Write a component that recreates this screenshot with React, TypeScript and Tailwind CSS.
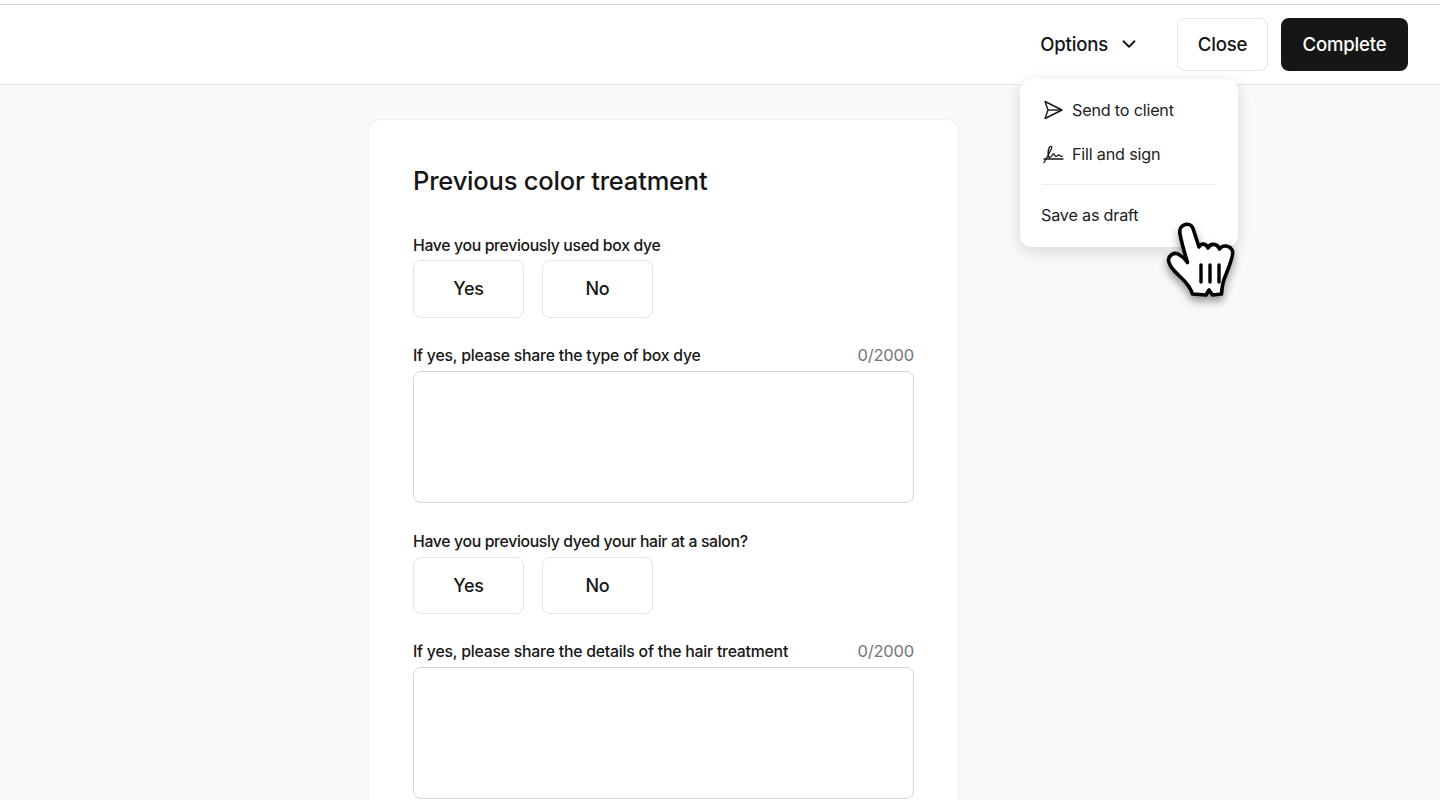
import { ChevronDown } from "lucide-react";

const FONT = "font-['Inter','Noto_Sans',sans-serif]";

const YesNo = () => (
  <div className="flex gap-[18px]">
    {["Yes", "No"].map((label) => (
      <button
        key={label}
        className="flex h-[57.5px] w-[111px] items-center justify-center rounded-lg border border-[#e4e4e4] bg-white text-[18px] font-medium tracking-[-0.2px] text-[#161616]"
      >
        {label}
      </button>
    ))}
  </div>
);

const TextField = ({ label }: { label: string }) => (
  <div>
    <div className="flex h-[30px] items-center justify-between">
      <span className="text-[15.8px] font-medium tracking-[-0.22px] text-[#161616]">{label}</span>
      <span className="text-[16.5px] tracking-[-0.2px] text-[#757575]">0/2000</span>
    </div>
    <div className="h-[132.5px] rounded-lg border border-[#d6d6d6] bg-white" />
  </div>
);

const SendIcon = () => (
  <svg width="22" height="22" viewBox="0 0 22 22" fill="none" stroke="#161616" strokeWidth="1.4" strokeLinejoin="round" className="ml-px">
    <path d="M3 2.5 20 11 3 19.5 6 11Z" />
    <path d="M6 11h14" />
  </svg>
);

const SignIcon = () => (
  <svg width="22" height="22" viewBox="0 0 22 22" fill="none" stroke="#161616" strokeWidth="1.3" strokeLinecap="round" strokeLinejoin="round" className="ml-px">
    <path d="M2 19.5C4.5 15 8 9 9.5 5.5 10.5 3 8 2.5 7 5 6 7.5 6 12 7 14.5 9.5 15 10 11 11.5 11 12.5 11 12.5 13.5 14 13.5 15.5 13.5 15.5 12 16.5 12 17.5 12 18 13.5 20 13.5" />
    <path d="M2 16h19" />
  </svg>
);

const HandCursor = () => (
  <svg
    width="100"
    height="100"
    viewBox="0 0 100 100"
    className="absolute left-[1150px] top-[210px] drop-shadow-[0_5px_4px_rgba(0,0,0,0.4)]"
  >
    <path
      d="M30 24C28 14 40 11 43 18.5L49 37C51 33 56 33 58 38 60 33 67 33 69.5 39 72.5 34.5 80 35 82.5 41 84 45 77 62 74.5 68 72.5 73 72 78 71.5 84L62.5 85 59 80 56 85 42.5 84C40.5 77 36 72 29.5 66 25 62 19 56 18.5 50.5 18.5 45 24 42 28 44 32 46 35 49 37.5 52.5 35 44 31.5 33 30 24Z"
      fill="#fff"
      stroke="#000"
      strokeWidth="3.6"
      strokeLinejoin="round"
    />
    <path d="M51 55V72M60 55V72M69 55V72" stroke="#000" strokeWidth="3.4" strokeLinecap="round" fill="none" />
  </svg>
);

export default function App() {
  return (
    <div className={`relative h-[800px] overflow-hidden bg-[#f9f9f9] ${FONT} text-[#161616]`}>
      <div className="h-[5px] border-b border-[#d9d9d9] bg-white" />

      <header className="flex h-[80px] items-center justify-end border-b border-[#e6e6e6] bg-white pb-[1px] pr-8">
        <button className="flex items-center pt-[1px] text-[18.6px] font-medium tracking-[-0.2px]">
          Options
          <ChevronDown className="ml-[10px] h-[22px] w-[22px]" strokeWidth={2} />
        </button>
        <button className="ml-[37px] h-[53px] w-[91px] rounded-lg border border-[#e4e4e4] bg-white pt-[1px] text-[18.6px] font-medium tracking-[-0.2px]">
          Close
        </button>
        <button className="ml-[13px] h-[53px] w-[127px] rounded-lg bg-[#161616] pt-[1px] text-[18.6px] font-medium tracking-[-0.2px] text-white">
          Complete
        </button>
      </header>

      <main className="ml-[368px] mt-[34px] w-[591px] rounded-t-xl border border-b-0 border-[#efefef] bg-white px-11 pt-[44px] pb-10">
        <h1 className="h-[34px] text-[25.5px] leading-[34px] font-medium tracking-[-0.2px] text-[#161616]">
          Previous color treatment
        </h1>

        <div className="mt-[34px] flex flex-col">
          <div className="flex h-[28px] items-center text-[15.8px] font-medium tracking-[-0.35px]">
            Have you previously used box dye
          </div>
          <YesNo />
          <div className="mt-[23px]">
            <TextField label="If yes, please share the type of box dye" />
          </div>
          <div className="mt-[23px] flex h-[30.5px] items-center pt-px text-[15.8px] font-medium tracking-[-0.35px]">
            Have you previously dyed your hair at a salon?
          </div>
          <YesNo />
          <div className="mt-[22.5px]">
            <TextField label="If yes, please share the details of the hair treatment" />
          </div>
        </div>
      </main>

      {/* options dropdown */}
      <div className="absolute left-[1020px] top-[79px] h-[168px] w-[218px] rounded-xl bg-white px-[21px] pt-[9px] shadow-[0_4px_16px_rgba(0,0,0,0.14)]">
        <div className="flex h-[44px] items-center gap-[8px] text-[16.2px] tracking-[-0.2px] text-[#222222]">
          <SendIcon />
          Send to client
        </div>
        <div className="flex h-[44px] items-center gap-[8px] text-[16.2px] tracking-[-0.2px] text-[#222222]">
          <SignIcon />
          Fill and sign
        </div>
        <div className="mx-px mt-[8px] border-t border-[#ececec]" />
        <div className="flex h-[61px] items-center text-[16.2px] tracking-[-0.2px] text-[#222222]">Save as draft</div>
      </div>

      <HandCursor />
    </div>
  );
}
